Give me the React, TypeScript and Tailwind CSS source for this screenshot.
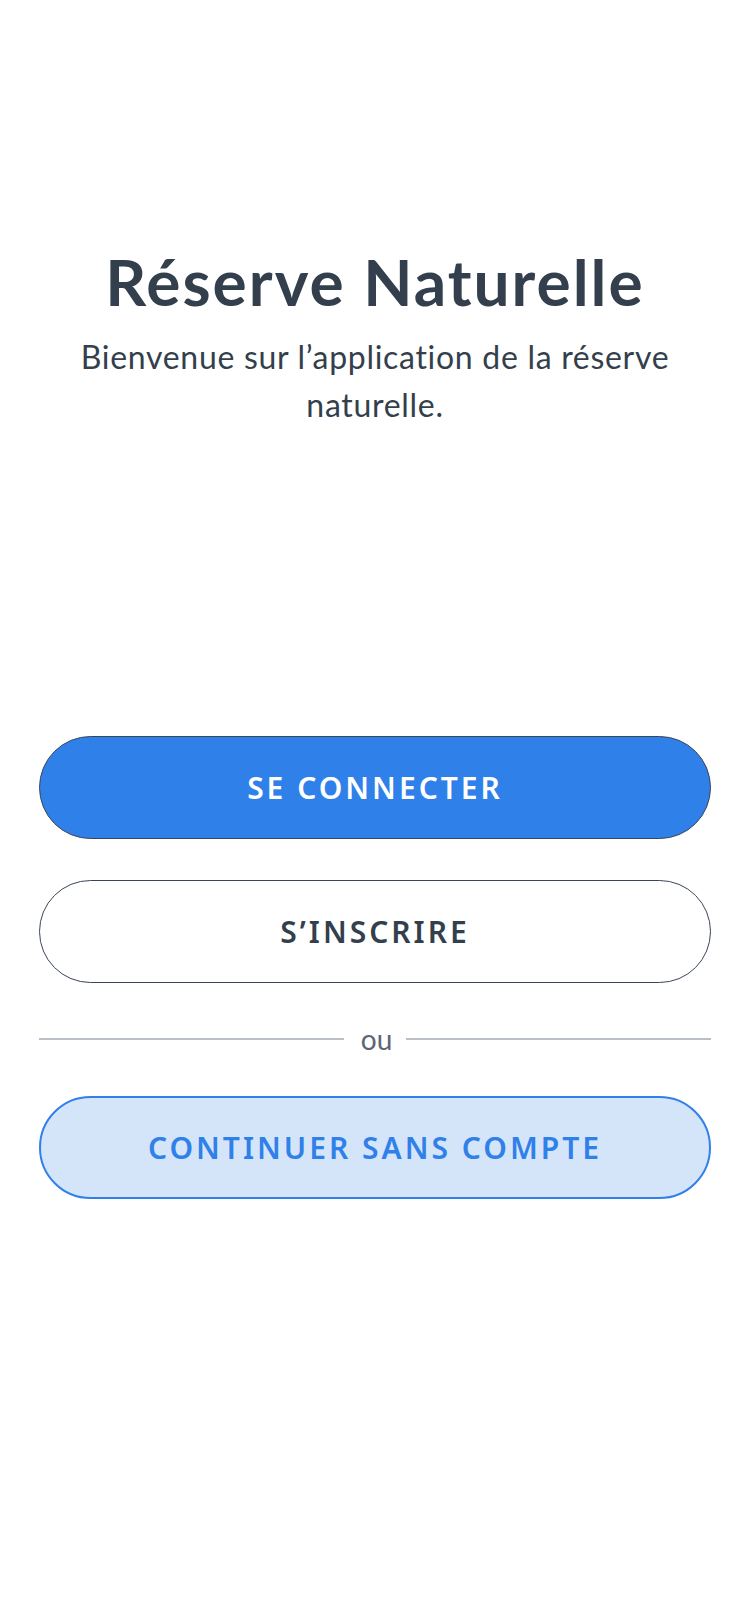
export default function App() {
  return (
    <div className="w-[750px] h-[1624px] bg-white flex flex-col items-center" style={{ fontFamily: 'Lato, "Noto Sans", sans-serif' }}>
      <h1 className="mt-[243px] text-[64px] leading-[77px] font-bold tracking-[2px] text-[#333f4c]">Réserve Naturelle</h1>
      <p className="mt-[13px] w-[660px] text-center text-[32px] leading-[48px] tracking-[0.7px] text-[#333f4c]">
        Bienvenue sur l’application de la réserve naturelle.
      </p>
      <div className="mt-[307px] w-[672px] flex flex-col">
        <button className="h-[103px] w-full rounded-full bg-[#3080ea] border border-[#3a4656] text-white text-[30px] font-semibold tracking-[3px]" style={{ fontFamily: '"Noto Sans", sans-serif' }}>
          SE CONNECTER
        </button>
        <button className="mt-[41px] h-[103px] w-full rounded-full bg-white border border-[#3a4656] text-[#333f4c] text-[30px] font-semibold tracking-[3px]" style={{ fontFamily: '"Noto Sans", sans-serif' }}>
          S’INSCRIRE
        </button>
        <div className="mt-[41px] h-[30px] flex items-center">
          <div className="flex-1 h-[2px] bg-[#b9bfc6]" />
          <span className="pl-[17px] pr-[14px] text-[28px] text-[#5b6675] leading-[30px]">ou</span>
          <div className="flex-1 h-[2px] bg-[#b9bfc6]" />
        </div>
        <button className="mt-[42px] h-[103px] w-full rounded-full bg-[#d5e5f9] border-2 border-[#3080ea] text-[#3080ea] text-[30px] font-semibold tracking-[3px]" style={{ fontFamily: '"Noto Sans", sans-serif' }}>
          CONTINUER SANS COMPTE
        </button>
      </div>
    </div>
  );
}
